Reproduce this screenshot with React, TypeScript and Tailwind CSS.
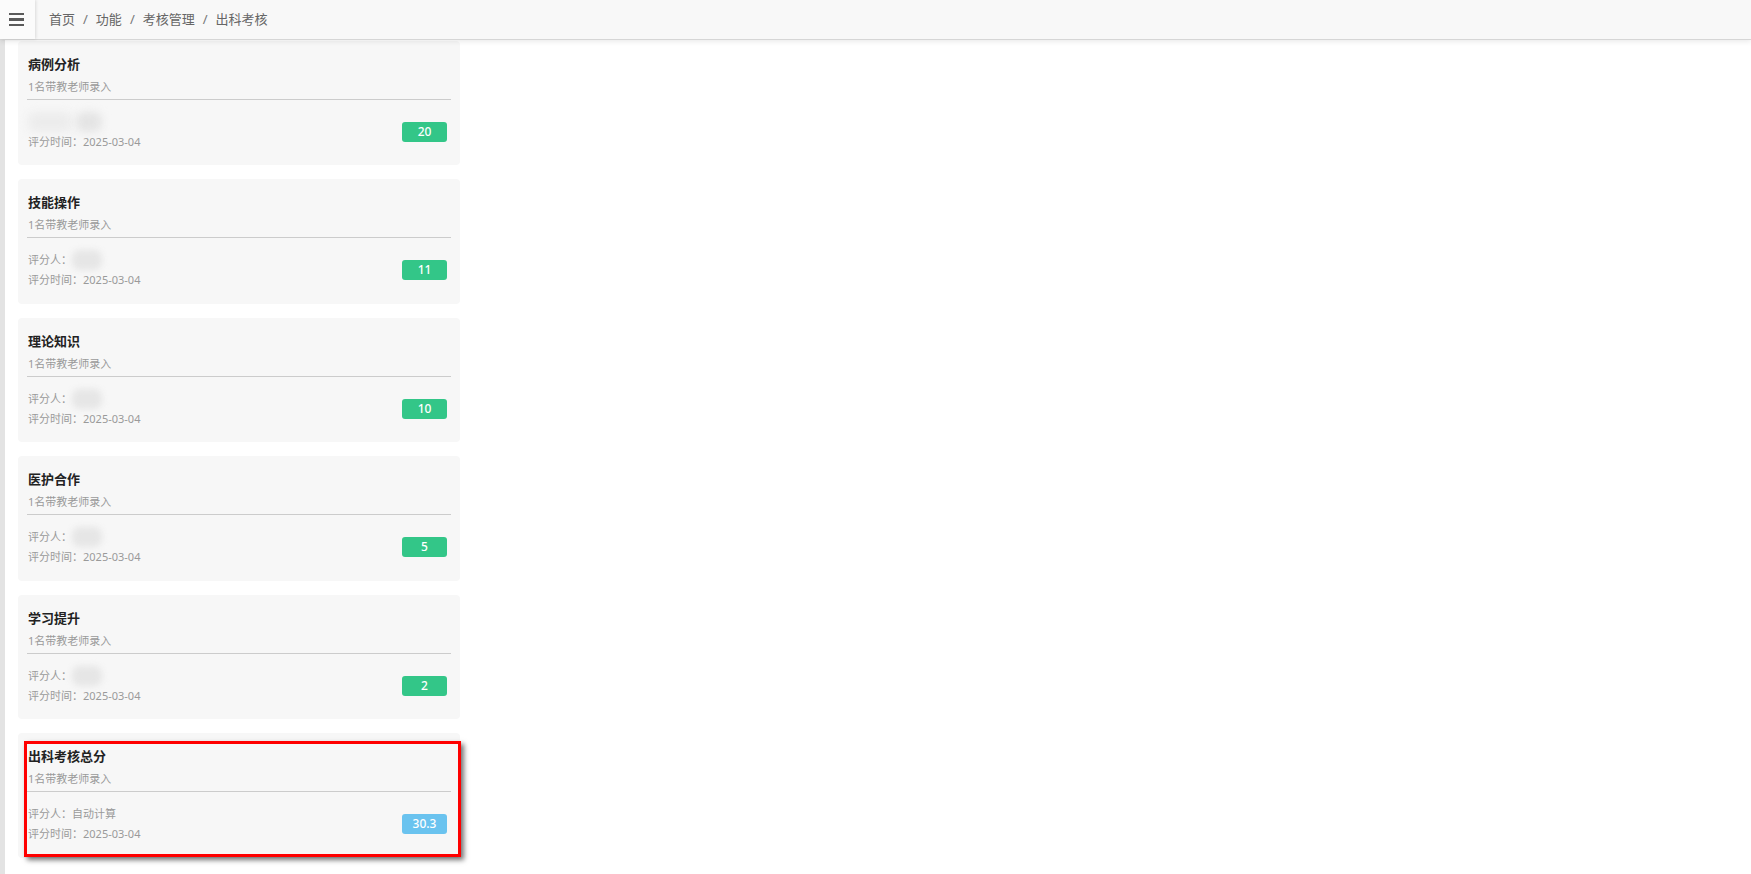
import React from "react";

type Item = {
  title: string;
  score: string;
  color: "green" | "blue";
  rater?: string;
  hideRow?: boolean;
  marked?: boolean;
};

const items: Item[] = [
  { title: "病例分析", score: "20", color: "green", hideRow: true },
  { title: "技能操作", score: "11", color: "green" },
  { title: "理论知识", score: "10", color: "green" },
  { title: "医护合作", score: "5", color: "green" },
  { title: "学习提升", score: "2", color: "green" },
  { title: "出科考核总分", score: "30.3", color: "blue", rater: "自动计算", marked: true },
];

function Card({ item }: { item: Item }) {
  return (
    <div className="relative h-[124.5px] shrink-0 rounded-[4px] bg-[#f7f7f7] px-[9px] pt-[14px]">
      <div className="h-[18px] pl-[1px] text-[13px] font-bold leading-[18px] text-[#222]">{item.title}</div>
      <div className="mt-[5px] h-[18px] pl-[1px] text-[11px] leading-[18px] text-[#9a9a9a]">1名带教老师录入</div>
      <div className="mt-[3px] h-px bg-[#cccccc]" />
      <div className="mt-[12px] flex items-center justify-between pr-[4px]">
        <div className="flex flex-col pl-[1px] text-[11px] text-[#9a9a9a]">
          {item.hideRow ? (
            <div className="flex h-[20px] items-center gap-[4px]">
              <div className="h-[20px] w-[44px] rounded-[6px] bg-[#ececec] blur-[4px]" />
              <div className="h-[20px] w-[26px] rounded-[8px] bg-[#e4e4e4] blur-[4px]" />
            </div>
          ) : (
            <div className="flex h-[20px] items-center leading-[20px]">
              <span>评分人：</span>
              {item.rater ? (
                <span>{item.rater}</span>
              ) : (
                <div className="h-[20px] w-[30px] rounded-[8px] bg-[#e6e6e6] blur-[3px]" />
              )}
            </div>
          )}
          <div className="h-[20px] leading-[20px]">评分时间：2025-03-04</div>
        </div>
        <div
          className={
            "flex h-[20px] w-[45px] items-center justify-center rounded-[3px] text-[12px] font-medium text-white " +
            (item.color === "green" ? "bg-[#33c688]" : "bg-[#6ac3ef]")
          }
        >
          {item.score}
        </div>
      </div>
      {item.marked && (
        <div className="pointer-events-none absolute left-[6px] top-[8px] h-[116px] w-[437px] border-[3px] border-[#ff0000] shadow-[3px_3px_5px_rgba(0,0,0,0.55)]" />
      )}
    </div>
  );
}

export default function App() {
  const crumbs = ["首页", "功能", "考核管理", "出科考核"];
  return (
    <div className="relative flex h-[874px] w-full flex-col overflow-hidden bg-white font-['Noto_Sans','Noto_Sans_CJK_SC',sans-serif]">
      <header className="relative z-10 flex h-[40px] shrink-0 border-b border-[#d6d6d6] bg-[#f8f8f8] shadow-[0_2px_5px_rgba(0,0,0,0.08)]">
        <div className="flex h-[39px] w-[35px] flex-col items-center justify-center gap-[3px] bg-[#fbfbfb] pr-[2px] shadow-[1px_0_3px_rgba(0,0,0,0.12)]">
          <span className="block h-[2.5px] w-[15px] bg-[#5a5a5a]" />
          <span className="block h-[2.5px] w-[15px] bg-[#5a5a5a]" />
          <span className="block h-[2.5px] w-[15px] bg-[#5a5a5a]" />
        </div>
        <nav className="flex items-center pl-[14px] text-[13px] text-[#666]">
          {crumbs.map((c, i) => (
            <React.Fragment key={c}>
              {i > 0 && <span className="mx-[8px] text-[#777]">/</span>}
              <span>{c}</span>
            </React.Fragment>
          ))}
        </nav>
      </header>
      <div className="flex min-h-0 flex-1">
        <div className="w-[5px] shrink-0 bg-[#e3e3e3]" />
        <div className="flex w-[455px] shrink-0 flex-col gap-[14px] pl-[13px] pt-[0.5px]">
          {items.map((it) => (
            <Card key={it.title} item={it} />
          ))}
        </div>
      </div>
    </div>
  );
}
